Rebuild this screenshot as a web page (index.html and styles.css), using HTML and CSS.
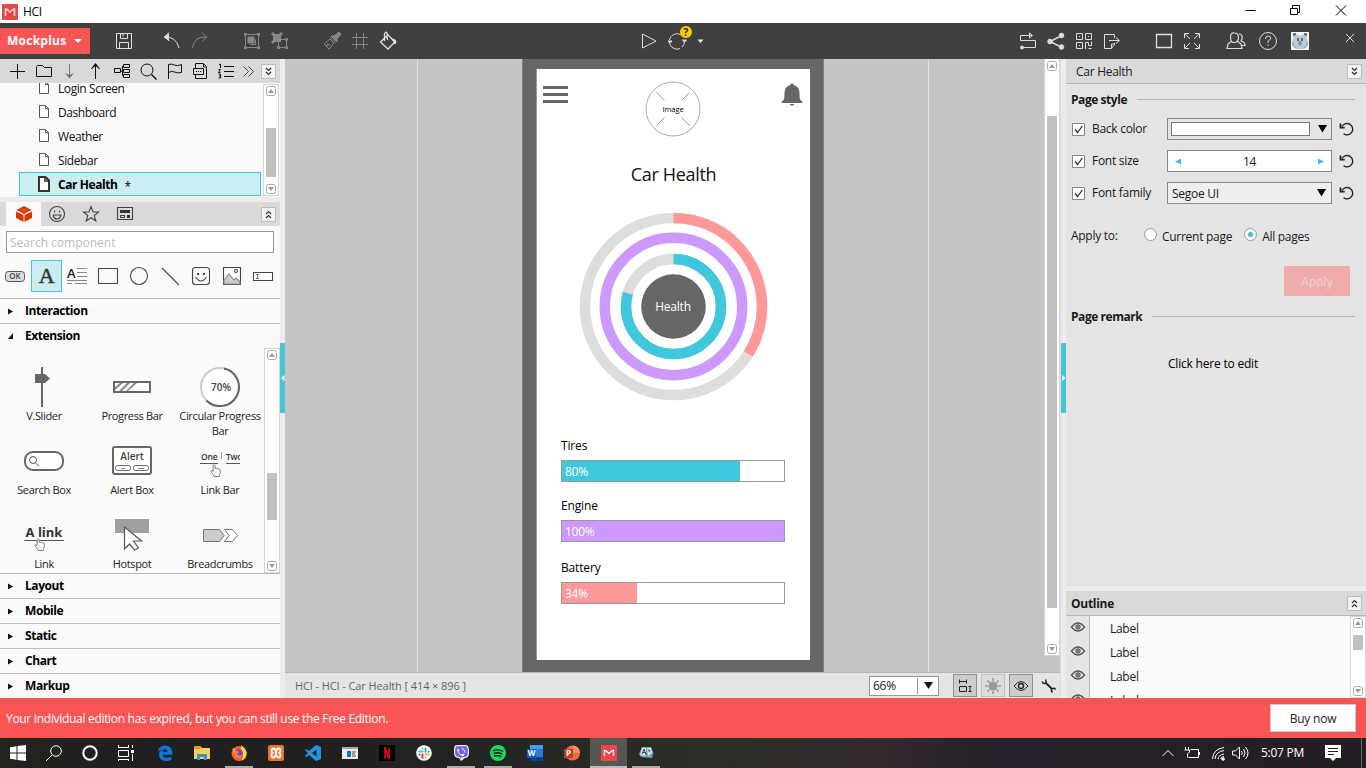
FILE: index.html
```html
<!DOCTYPE html>
<html lang="en">
<head>
<meta charset="utf-8">
<title>HCI</title>
<link rel="stylesheet" href="styles.css">
</head>
<body>
<svg class="defs" width="0" height="0">
  <symbol id="up" viewBox="0 0 10 10"><rect x=".5" y=".5" width="9" height="9" rx="2" fill="#fff" stroke="#aaa"/><path d="M2 7l3-4 3 4z" fill="#999"/></symbol>
  <symbol id="down" viewBox="0 0 10 10"><rect x=".5" y=".5" width="9" height="9" rx="2" fill="#fff" stroke="#aaa"/><path d="M2 3h6L5 7z" fill="#999"/></symbol>
  <symbol id="page" viewBox="0 0 12 16"><path d="M1.500 1.500h6l3 3v9h-9z" fill="#fff" stroke="#555"/><path d="M7.500 1.500v3h3" fill="none" stroke="#555"/></symbol>
  <symbol id="collapse" viewBox="0 0 15 15"><path d="M.5.5h14v14H.5z" fill="#f2f2f2" stroke="#bbb"/><path d="M5 4l2.500 2.500L10 4M5 8l2.500 2.500L10 8" fill="none" stroke="#333" stroke-width="1.200"/></symbol>
  <symbol id="expand" viewBox="0 0 15 15"><path d="M.5.5h14v14H.5z" fill="#f2f2f2" stroke="#bbb"/><path d="M5 7l2.500-2.500L10 7M5 11l2.500-2.500L10 11" fill="none" stroke="#333" stroke-width="1.200"/></symbol>
  <symbol id="eye" viewBox="0 0 16 12"><path d="M1.500 6Q8-2 14.500 6 8 14 1.500 6z" fill="none" stroke="#555" stroke-width="1.400"/><circle cx="8" cy="6" r="2.200" fill="#888" stroke="#555"/></symbol>
  <symbol id="reset" viewBox="0 0 16 16"><path d="M3 5.500A5.700 5.700 0 1 1 4.500 12.700" fill="none" stroke="#222" stroke-width="1.300"/><path d="M1.500 2.500v4.200h4.200" fill="none" stroke="#222" stroke-width="1.800"/></symbol>
  <symbol id="check" viewBox="0 0 13 13"><path d="M.5.5h12v12H.5z" fill="#fff" stroke="#888"/><path d="M3 6.500l2.500 3L10.300 3" fill="none" stroke="#222" stroke-width="1.200"/></symbol>
  <symbol id="hand" viewBox="0 0 14 16"><path d="M4.500 9V2.500q1-2 2 0V6q1-1 2 0 1-1 2 .5 1.500-.5 1.500 1V11q-1 1-1 3.500H5.500Q5 12 2 9.500 2 7 4.500 9" fill="#fff" stroke="#777"/></symbol>
</svg>

<header class="titlebar">
  <svg width="16" height="16"><rect width="16" height="16" rx="1" fill="#e2474b"/><path d="M3.500 12V5h1L8 8l3.500-3h1v7" fill="none" stroke="#ffd9d6" stroke-width="1.600"/></svg>
  <span class="apptitle">HCI</span>
  <svg class="winctl" width="110" height="23"><path d="M2.500 10.500h10" stroke="#000"/><path d="M47.500 8.500h7v6h-7zM49.500 8V5.500h7v7H55" fill="none" stroke="#000"/><path d="M93 5.500l10 10M103 5.500l-10 10" stroke="#000"/></svg>
</header>

<nav class="toolbar">
  <button class="brand">Mockplus <i></i></button>
  <div class="tools g1">
    <svg class="t" viewBox="0 0 24 24"><path d="M4.500 4.500h15v15h-15zM8.500 4.500v5h7v-5M7.500 19.500v-6h9v6M11 4.500v3"/></svg>
  </div>
  <div class="tools g2">
    <svg class="t" viewBox="0 0 24 24"><path d="M4 8q12-1 15 11M9 3.500L4.500 8l5 4"/><path d="M4 8l5-4v8z" fill="#ddd" stroke="none"/></svg>
    <svg class="t dim" viewBox="0 0 24 24"><path d="M19 8Q6 7 4.500 19M14 3.500L18.500 8l-4 4"/></svg>
  </div>
  <div class="tools g3">
    <svg class="t dim" viewBox="0 0 24 24"><path d="M5.500 5.500h13v13h-13zM4 4.500h3M4.500 4v3M17 4.500h3M19.500 4v3M4 19.500h3M4.500 17v3M17 19.500h3M19.500 17v3"/><path d="M8 8h6v6H8z" fill="#888"/><path d="M15.500 10.500v5h-5"/></svg>
    <svg class="t dim" viewBox="0 0 24 24"><path d="M5 5h8v8H5z" fill="#888" stroke="none"/><path d="M4 4h2v2H4zM12 4h2v2h-2zM4 12h2v2H4z" fill="#888"/><path d="M10.500 10.500h8v8h-8zM17.500 9.500h2v2h-2zM9.500 17.500h2v2h-2zM17.500 17.500h2v2h-2z"/></svg>
  </div>
  <div class="tools g3">
    <svg class="t dim" viewBox="0 0 24 24"><path d="M10 8l6 6M4 15l6-5 4 4-5 6zM7 15l3 1M6 17l2-1"/><path d="M11 7l3 0 5-4 2 2-4 5v3z" fill="#888"/></svg>
    <svg class="t dim" viewBox="0 0 24 24"><path d="M8.500 4v16M15.500 4v16M4 8.500h16M4 15.500h16"/></svg>
    <svg class="t" viewBox="0 0 24 24"><path d="M4.500 13L12 6l7 7-7 7zM8.500 12V5q1-3 2.500-1l.5 7M12 6l5 5" stroke-width="1.300"/><path d="M16 10q4 0 4 3l-1 2z" fill="#ddd"/></svg>
  </div>
  <div class="tools g4">
    <svg class="t" viewBox="0 0 24 24"><path d="M6.500 5v14L20 12z"/></svg>
    <div class="sync"><svg class="t" viewBox="0 0 24 24"><path d="M4.500 11A7.500 7.500 0 0 1 16 6M19.500 12A7.500 7.500 0 0 1 17 18M15 19.500A7.500 7.500 0 0 1 4.500 13"/><path d="M3 12.500h4M17.500 11.500h4" stroke-width="2"/></svg><b>?</b></div>
    <svg class="caret" viewBox="0 0 12 24"><path d="M3.500 10.500h6L6.500 14z" fill="#eee"/></svg>
  </div>
  <div class="tools g5">
    <svg class="t" viewBox="0 0 24 24"><path d="M16 6.500H4.500v5h15v7H7M13.500 4v5l3-2.500z"/><circle cx="6" cy="18.500" r="1.500" fill="#ddd"/></svg>
    <svg class="t" viewBox="0 0 24 24"><path d="M17 7L6 12.500 17 18" stroke-width="1.400"/><circle cx="17.500" cy="6.500" r="2.300" fill="#ddd"/><circle cx="6" cy="12.500" r="2.300" fill="#ddd"/><circle cx="17.500" cy="18" r="2.300" fill="#ddd"/></svg>
    <svg class="t" viewBox="0 0 24 24"><path d="M4.500 4.500h6v6h-6zM13.500 4.500h6v6h-6zM4.500 13.500h6v6h-6zM13.500 20v-6.500h3v3h3v-4M16.500 19.500h3M7 7.500h1M16 7.500h1M7 16.500h1"/></svg>
    <svg class="t" viewBox="0 0 24 24"><path d="M14.500 9V5.500h-10v14h7l3-4V14M11.500 19v-4h3M9 11.500h10M16 8.500l3.500 3-3.500 3"/></svg>
  </div>
  <div class="tools g3">
    <svg class="t" viewBox="0 0 24 24"><path d="M4.500 5.500h15v13h-15z" stroke-width="1.300"/></svg>
    <svg class="t" viewBox="0 0 24 24"><path d="M4.500 9V4.500H9M15 4.500h4.500V9M4.500 15v4.500H9M15 19.500h4.500V15M5 5l5 5M19 5l-5 5M5 19l5-5M19 19l-5-5"/></svg>
  </div>
  <div class="tools g6">
    <svg class="t" viewBox="0 0 24 24"><path d="M10.500 4q4 0 4 4.500t-4 5-4-5T10.500 4M8 12l-4 3-1 4.500h15L17 15l-4-3M15 5q4 0 3 5l-1 2q4 1 4 4.500h-3" stroke-width="1.200"/></svg>
    <svg class="t" viewBox="0 0 24 24"><circle cx="12" cy="12" r="8.500"/><path d="M9.500 10q0-3 2.700-3t2.500 2.500Q14 11 12 12.200V14M12 15.500V17"/></svg>
    <svg class="t" viewBox="0 0 24 24"><path d="M3 3h18v18H3z" fill="#f4f7f8" stroke="none"/><path d="M5 8l3-3 4 2 4-2 3 3 1 7-4 5H8l-4-5z" fill="#b9cbd8" stroke="none"/><path d="M6 7V5h2M18 7V5h-2M10 9v3M14 9v3" stroke="#3c4f60" stroke-width="1.500"/><path d="M5 13v4l3 2M19 13v4l-3 2" stroke="#7f98aa"/><ellipse cx="12" cy="14" rx="2" ry="2.500" fill="#8295a4" stroke="none"/></svg>
  </div>
  <svg class="t close" viewBox="0 0 24 24"><path d="M8 5l8 8M16 5l-8 8"/></svg>
</nav>

<main class="work">
  <aside class="left">
    <div class="pagebar">
      <svg class="p" viewBox="0 0 26 24"><path d="M13.500 5v15M6 12.500h15"/></svg>
      <svg class="p r1" viewBox="0 0 26 24"><path d="M5.500 17.500v-10l1-1h5l2 2h7v9z"/></svg>
      <svg class="p l1 gray" viewBox="0 0 26 24"><path d="M13.500 5v14"/><path d="M9 14l4.500 5.500L18 14l-4.500 2z" fill="#777" stroke="none"/></svg>
      <svg class="p" viewBox="0 0 26 24"><path d="M13.500 20V6M9.500 10l4-5 4 5"/><path d="M9 10l4.500-6L18 10l-4.500-3z" fill="#111" stroke="none"/></svg>
      <svg class="p r1" viewBox="0 0 26 24"><path d="M5.500 9.500h6v4h-6zM14.500 5.500h6v3h-6zM14.500 10.500h6v3h-6zM14.500 15.500h6v3h-6zM12 12h2M13.500 7v10"/></svg>
      <svg class="p" viewBox="0 0 26 24"><circle cx="12" cy="11" r="6"/><path d="M16.500 15.500l5 5" stroke-width="1.400"/></svg>
      <svg class="p" viewBox="0 0 26 24"><path d="M7.500 20V5.500q3-1 6 .5t7-.5v8q-4 1-7-.5t-6 .5"/></svg>
      <svg class="p" viewBox="0 0 26 24"><path d="M8.500 9V4.500h8l3 3v12h-11V16M6.500 9.500h10v6h-10zM16.500 5v3h3M9 12.500h1M11 12.500h1M13 12.500h1"/></svg>
      <svg class="p" viewBox="0 0 26 24"><path d="M11 7.500h10M11 12.500h10M11 17.500h10M6 6l1.500-1v4M5.500 10.500h2l-2 3h2M5.500 15h2v2h-1.500M7.500 17v2h-2"/></svg>
      <svg class="p l4" viewBox="0 0 26 24"><path d="M8.500 7.500l5 5-5 5M13.500 7.500l5 5-5 5" stroke="#444"/></svg>
      <svg class="fold" width="15" height="15"><use href="#collapse"/></svg>
    </div>
    <div class="tree">
      <ul class="pages">
        <li><svg width="12" height="16"><use href="#page"/></svg><span>Login Screen</span></li>
        <li><svg width="12" height="16"><use href="#page"/></svg><span>Dashboard</span></li>
        <li><svg width="12" height="16"><use href="#page"/></svg><span>Weather</span></li>
        <li><svg width="12" height="16"><use href="#page"/></svg><span>Sidebar</span></li>
        <li class="on"><svg width="12" height="16" viewBox="0 0 12 16"><path d="M1 1h6.500L11 4.500V15H1z" fill="#fff" stroke="#333" stroke-width="2"/><path d="M7 1v4h4" fill="none" stroke="#333" stroke-width="1.500"/></svg><span>Car Health</span><small>*</small></li>
      </ul>
      <div class="sb"><svg width="10" height="10"><use href="#up"/></svg><span class="th t1"></span><svg class="end" width="10" height="10"><use href="#down"/></svg></div>
    </div>
    <div class="tabs">
      <span class="tab"><svg width="18" height="18" viewBox="0 0 18 18"><path d="M1.500 5L9 1l7.500 4L9 9z" fill="#dc3704"/><path d="M1 6.500L8.500 10v7L1 13zM17 6.500L9.500 10v7l7.500-4z" fill="#dc3704"/><path d="M5.500 3l7 4M12.500 3l-7 4" stroke="#e9683f" stroke-width=".7"/></svg></span>
      <svg width="18" height="18" viewBox="0 0 18 18" class="ln"><circle cx="9" cy="9" r="7.500"/><path d="M5 10h8q-1 4-4 4t-4-4M6.500 5.500v2M11.500 5.500v2"/></svg>
      <svg width="18" height="18" viewBox="0 0 18 18" class="ln"><path d="M9 1.500l2 5.500h5.500l-4.300 3.500 1.600 5.500L9 12.700 4.200 16l1.600-5.500L1.500 7H7z"/></svg>
      <svg width="18" height="18" viewBox="0 0 18 18" class="ln"><path d="M1.500 2.500h15v12h-15z" /><path d="M4 5h10v3H4zM11 10h3v3h-3z" fill="#333" stroke="none"/><path d="M4.500 10.500h4v2h-4z"/></svg>
      <svg class="fold" width="15" height="15"><use href="#expand"/></svg>
    </div>
    <div class="search">Search component</div>
    <div class="quick">
      <svg viewBox="0 0 31 32"><rect x="5.500" y="11.500" width="19" height="10" rx="3" fill="#ddd" stroke="#555"/><text x="15" y="19.400" text-anchor="middle" class="ok">OK</text></svg>
      <svg viewBox="0 0 31 32" class="sel"><text x="15.500" y="23" text-anchor="middle" class="serif">A</text></svg>
      <svg viewBox="0 0 31 32"><text x="5" y="18" class="para">A</text><path d="M15 8.500h10M15 12.500h10M15 16.500h10M5 20.500h20M5 23.500h5M13 23.500h12" stroke="#888"/></svg>
      <svg viewBox="0 0 31 32" class="ln"><path d="M5.500 8.500h19v15h-19z"/></svg>
      <svg viewBox="0 0 31 32" class="ln"><circle cx="15" cy="16" r="8.500"/></svg>
      <svg viewBox="0 0 31 32" class="ln"><path d="M7 8l17 17"/></svg>
      <svg viewBox="0 0 31 32" class="ln"><rect x="6.500" y="7.500" width="17" height="17" rx="3"/><path d="M9.500 17q5.500 8 11 0"/><path d="M11 14h2M17 14h2" stroke-width="2"/></svg>
      <svg viewBox="0 0 31 32" class="ln"><path d="M6.500 7.500h17v17h-17z"/><path d="M7 20l5-6 5 6 2-2 4 4v2H7z" fill="#ccc" stroke="#888"/><circle cx="19" cy="11" r="1.500"/></svg>
      <svg viewBox="0 0 31 32" class="ln"><path d="M5.500 12.500h19v8h-19z" fill="#fff"/><path d="M8 14.500h3M9.500 14.500v4M8 18.500h3" stroke="#777"/></svg>
    </div>
    <div class="sec first"><svg width="6" height="7"><path d="M0 .5l5 3-5 3z" fill="#111"/></svg>Interaction</div>
    <div class="sec open"><svg width="6" height="7"><path d="M5 0v6H0z" fill="#111"/></svg>Extension</div>
    <div class="ext">
      <div class="comps">
        <figure><svg viewBox="0 0 88 48"><path d="M42 4v40" stroke="#666" stroke-width="2"/><path d="M35 11h10l5 4.500-5 4.500H35z" fill="#666"/></svg><figcaption>V.Slider</figcaption></figure>
        <figure><svg viewBox="0 0 88 48"><path d="M26 19h36v10H26z" fill="#fff" stroke="#666" stroke-width="2"/><path d="M27 24l5-4h3l-8 7zM31 28l8-8h3l-8 8zM38 28l8-8h3l-9 8z" fill="#888"/></svg><figcaption>Progress Bar</figcaption></figure>
        <figure><svg viewBox="0 0 88 48"><circle cx="44" cy="24" r="19" fill="#fff" stroke="#ccc" stroke-width="2"/><path d="M48 5.500A19 19 0 1 1 30.500 37.500" fill="none" stroke="#666" stroke-width="2"/><text x="45" y="28" text-anchor="middle" class="lbl9">70%</text></svg><figcaption>Circular Progress Bar</figcaption></figure>
        <figure><svg viewBox="0 0 88 48"><rect x="25" y="15" width="38" height="18" rx="8" fill="#fff" stroke="#666" stroke-width="2"/><circle cx="33" cy="23" r="3.500" fill="none" stroke="#555"/><path d="M35.500 26l3.500 3" stroke="#555"/></svg><figcaption>Search Box</figcaption></figure>
        <figure><svg viewBox="0 0 88 48"><rect x="25" y="10" width="38" height="27" rx="2" fill="#fff" stroke="#666" stroke-width="2"/><text x="44" y="23" text-anchor="middle" class="lbl9">Alert</text><rect x="27.500" y="28.500" width="15" height="5" rx="2" fill="none" stroke="#666"/><rect x="45.500" y="28.500" width="15" height="5" rx="2" fill="none" stroke="#666"/><path d="M33 31.500h4M50 31.500h6" stroke="#888"/></svg><figcaption>Alert Box</figcaption></figure>
        <figure><svg viewBox="0 0 88 48"><svg x="24" y="12" width="40" height="18"><text x="1" y="11" class="lbl8">One</text><text x="26" y="11" class="lbl8">Two</text><path d="M21.500 3v7" stroke="#999"/></svg><path d="M24 26.500h18M50 26.500h14" stroke="#555"/><use href="#hand" x="33" y="26" width="13" height="15"/></svg><figcaption>Link Bar</figcaption></figure>
        <figure><svg viewBox="0 0 88 48"><text x="44" y="26" text-anchor="middle" class="lbl12">A link</text><path d="M24 29.500h40" stroke="#555"/><use href="#hand" x="33" y="26" width="13" height="15"/></svg><figcaption>Link</figcaption></figure>
        <figure><svg viewBox="0 0 88 48"><path d="M27 8h34v14H27z" fill="#a0a0a0"/><path d="M36.500 16v22l5-5 5 6 4-2-5-7h8z" fill="#fff" stroke="#555" stroke-width="1.200"/></svg><figcaption>Hotspot</figcaption></figure>
        <figure><svg viewBox="0 0 88 48"><path d="M27.500 18.500h16l4.500 6-4.500 6h-16z" fill="#ccc" stroke="#777"/><path d="M48.500 18.500h8l5 6-5 6h-8l4.500-6z" fill="#fff" stroke="#777"/></svg><figcaption>Breadcrumbs</figcaption></figure>
      </div>
      <div class="sb"><svg width="10" height="10"><use href="#up"/></svg><span class="th t2"></span><svg class="end" width="10" height="10"><use href="#down"/></svg></div>
    </div>
    <div class="sec"><svg width="6" height="7"><path d="M0 .5l5 3-5 3z" fill="#111"/></svg>Layout</div>
    <div class="sec"><svg width="6" height="7"><path d="M0 .5l5 3-5 3z" fill="#111"/></svg>Mobile</div>
    <div class="sec"><svg width="6" height="7"><path d="M0 .5l5 3-5 3z" fill="#111"/></svg>Static</div>
    <div class="sec"><svg width="6" height="7"><path d="M0 .5l5 3-5 3z" fill="#111"/></svg>Chart</div>
    <div class="sec"><svg width="6" height="7"><path d="M0 .5l5 3-5 3z" fill="#111"/></svg>Markup</div>
  </aside>
  <div class="split"><span><svg width="5" height="8"><path d="M4.500 1v6L1 4z" fill="#fff"/></svg></span></div>

  <section class="center">
    <div class="canvas">
      <div class="stage">
        <div class="guides">
          <div class="phone"><div class="screen">
            <div class="apphead">
              <svg class="menu" width="25" height="18"><path d="M0 1.500h25M0 8.500h25M0 15.500h25" stroke="#666" stroke-width="2.800"/></svg>
              <svg width="56" height="56" viewBox="0 0 56 56"><circle cx="28" cy="28" r="27" fill="#fff" stroke="#aaa"/><path d="M11.500 11.500l8 8M44.500 11.500l-8 8M11.500 44.500l8-8M44.500 44.500l-8-8" stroke="#999"/><text x="28" y="31" text-anchor="middle" class="imgt">Image</text></svg>
              <svg class="bell" width="22" height="24"><path d="M9.500 1q1.500-1.500 3 0v1q6 1.500 6 8 0 6 1 7l2 2v1H.5v-1l2-2q1-1 1-7 0-6.500 6-8zM8.500 21h5q-2.500 3.500-5 0z" fill="#666"/></svg>
            </div>
            <h1>Car Health</h1>
            <svg class="rings" width="190" height="190" viewBox="-95.500 -95.500 190 190">
              <g fill="none" stroke-width="10.500">
                <circle r="88.500" stroke="#ddd"/><circle r="68.700" stroke="#c9f"/><circle r="47.500" stroke="#ddd"/>
                <circle r="88.500" stroke="#f99" pathLength="100" stroke-dasharray="34 66" transform="rotate(-90)"/>
                <circle r="47.500" stroke="#41c7db" pathLength="100" stroke-dasharray="79.500 20.500" transform="rotate(-90)"/>
              </g>
              <circle r="32.300" fill="#666"/><text x="-.5" y="4.500" text-anchor="middle" class="health">Health</text>
            </svg>
            <div class="stat"><label>Tires</label><div class="bar"><span class="teal" style="width:80%">80%</span></div></div>
            <div class="stat"><label>Engine</label><div class="bar"><span class="purple" style="width:100%">100%</span></div></div>
            <div class="stat last"><label>Battery</label><div class="bar"><span class="pink" style="width:34%">34%</span></div></div>
          </div></div>
        </div>
      </div>
      <div class="sb big"><svg width="10" height="10"><use href="#up"/></svg><span class="th t3"></span><svg class="end" width="10" height="10"><use href="#down"/></svg></div>
    </div>
    <footer class="status">
      <span class="crumb">HCI - HCI - Car Health [ 414 × 896 ]</span>
      <div class="zoom"><span>66%</span><svg width="20" height="16"><path d="M6 4h9l-4.500 7z" fill="#111"/></svg></div>
      <span class="sbtn"><svg width="14" height="14"><path d="M1 2.500h8M1.500.5v4M8.500.5v4M1.500 7.500h7v5h-7zM10.500 7.500h3M12 7.500v5M10.500 12.500h3" fill="none" stroke="#222"/></svg></span>
      <span class="sbtn pale"><svg width="16" height="16" viewBox="-8 -8 16 16"><circle r="4.500" fill="#999"/><path d="M0-8v3M0 8V5M-8 0h3M8 0H5M-5.500-5.500l2 2M5.500-5.500l-2 2M-5.500 5.500l2-2M5.500 5.500l-2-2" stroke="#999" stroke-width="1.600"/></svg></span>
      <span class="sbtn"><svg width="16" height="12"><path d="M1 6Q8-3 15 6 8 15 1 6z" fill="none" stroke="#222"/><circle cx="8" cy="6" r="2.500" fill="none" stroke="#222" stroke-width="1.300"/></svg></span>
      <svg class="wrench" width="16" height="16" viewBox="0 0 16 16"><path d="M5 5l6 6" stroke="#222" stroke-width="1.800"/><path d="M1 3.500Q2 6 4 5.500 6 4.500 4.500 1.500M11.500 14.500q-2-2-.5-3.500 2-1.500 3.500.5" fill="none" stroke="#222" stroke-width="1.500"/></svg>
    </footer>
  </section>
  <div class="split rs"><span><svg width="5" height="8"><path d="M1 1v6l3.500-3z" fill="#fff"/></svg></span></div>

  <aside class="right">
    <div class="rhead"><span>Car Health</span><svg width="15" height="15"><use href="#collapse"/></svg></div>
    <div class="props">
      <h2>Page style<i></i></h2>
      <div class="row"><svg width="13" height="13"><use href="#check"/></svg><label>Back color</label><div class="field color"><span></span><svg width="9" height="8"><path d="M0 0h9L4.500 7.500z"/></svg></div><svg class="rst" width="16" height="16"><use href="#reset"/></svg></div>
      <div class="row"><svg width="13" height="13"><use href="#check"/></svg><label>Font size</label><div class="field num"><svg width="6" height="7"><path d="M6 .5v6l-6-3z" fill="#3dc4d8"/></svg><span>14</span><svg width="6" height="7"><path d="M0 .5v6l6-3z" fill="#3dc4d8"/></svg></div><svg class="rst" width="16" height="16"><use href="#reset"/></svg></div>
      <div class="row"><svg width="13" height="13"><use href="#check"/></svg><label>Font family</label><div class="field fam"><span>Segoe UI</span><svg width="9" height="8"><path d="M0 0h9L4.500 7.500z"/></svg></div><svg class="rst" width="16" height="16"><use href="#reset"/></svg></div>
      <div class="applyto"><label>Apply to:</label><span class="radio"></span><em>Current page</em><span class="radio on"></span><em>All pages</em></div>
      <button class="apply">Apply</button>
      <h2 class="remark">Page remark<i></i></h2>
      <p>Click here to edit</p>
    </div>
    <div class="rhead out"><b>Outline</b><svg width="15" height="15"><use href="#expand"/></svg></div>
    <div class="outline">
      <div class="eyes"><svg><use href="#eye"/></svg><svg><use href="#eye"/></svg><svg><use href="#eye"/></svg><svg><use href="#eye"/></svg></div>
      <ul><li>Label</li><li>Label</li><li>Label</li><li>Label</li></ul>
      <div class="sb"><svg width="10" height="10"><use href="#up"/></svg><span class="th t4"></span><svg class="end" width="10" height="10"><use href="#down"/></svg></div>
    </div>
  </aside>
</main>

<div class="notice"><span>Your Individual edition has expired, but you can still use the Free Edition.</span><button>Buy now</button></div>

<footer class="taskbar">
  <div class="apps sys">
    <span><svg viewBox="0 0 16 16"><path d="M0 2.200l6.500-1v6.300H0zM7.500 1L16 0v7.500H7.500zM0 8.500h6.500v6.300l-6.500-1zM7.500 8.500H16V16l-8.500-1z" fill="#fff"/></svg></span>
    <span><svg viewBox="0 0 16 16" class="wl"><circle cx="10" cy="6" r="5.300"/><path d="M6 10L0 16"/></svg></span>
    <span><svg viewBox="0 0 16 16" class="wl"><circle cx="8" cy="8" r="6.700" stroke-width="2"/></svg></span>
    <span><svg viewBox="0 0 16 16" class="wl"><path d="M0 2.500h11M.5 0v2.500M10.500 0v2.500M.5 5.500h10v6H.5zM0 14.500h11M.5 14v2M10.500 14v2M14.500 0v3M14.500 9v7"/><path d="M13 5h3v3h-3z" fill="#fff" stroke="none"/></svg></span>
  </div>
  <div class="apps main">
    <span><svg viewBox="0 0 16 16"><path d="M.8 7Q1.500.5 8 .5t7.300 6.500v2.700H5.500q.5 3 4.500 3 2.500 0 4.500-1v3Q12 16 9 16 2 15.500 2 9.500q0-3 3-5Q1.800 5 .8 7zM5.500 6.800h5Q10.300 4.300 8 4.300T5.500 6.800z" fill="#0b78d7" fill-rule="evenodd"/></svg></span>
    <span><svg viewBox="0 0 16 16"><path d="M0 1h6l2 2h8v11H0z" fill="#fbd05c"/><path d="M0 1h6l2 2-2 1H0z" fill="#e09d13"/><path d="M3 9h10v6h-3v-3H6v3H3z" fill="#3e91cf"/></svg></span>
    <span class="run"><svg viewBox="0 0 16 16"><circle cx="8" cy="8.500" r="7.500" fill="#fb5b31"/><path d="M10 0q6 4 5.500 9 0 5-5 6.500Q14 9 9 4q2-1 1-4z" fill="#ffd43b"/><path d="M1.500 3l3 1.500-2 4z" fill="#ffb52b"/><circle cx="8" cy="8" r="3.800" fill="#7542c9"/><path d="M3 6q3-1 5 1l-2 2q1 3 5 1-3 5-7 1z" fill="#fb8a2d"/></svg></span>
    <span><svg viewBox="0 0 16 16"><rect width="16" height="16" rx="2" fill="#ed742c"/><path d="M3.500 5.500q0-2 2-2 2 0 2.500 4.500.5-4.500 2.500-4.500 2 0 2 2 0 2-2 2.500 2 0 2 2.200 0 2.300-2 2.300-2 0-2.500-4.500-.5 4.500-2.500 4.500-2 0-2-2.300 0-2.200 2-2.200-2-.5-2-2.500" fill="none" stroke="#fff" stroke-width="1.800"/></svg></span>
    <span><svg viewBox="0 0 16 16"><path d="M11 0l5 2v12l-5 2-7-6-2.500 2L0 11l3-3-3-3 1.500-1L4 6zM11.500 4.500L7 8l4.500 3.500z" fill="#2196df" fill-rule="evenodd"/></svg></span>
    <span><svg viewBox="0 0 16 16"><path d="M0 2h16v12H0z" fill="#eee"/><path d="M0 2h16v2H0z" fill="#aaa"/><path d="M5 6h4v6H5z" fill="#0c78ce"/><path d="M10 7h4M10 9h3M10 11h4" stroke="#555"/></svg></span>
    <span><svg viewBox="0 0 16 16"><path d="M0 0h16v16H0z" fill="#000"/><path d="M6 14V3M10 14V3" stroke="#b20610" stroke-width="2"/><path d="M5 2h2l4 12H9z" fill="#e50914"/></svg></span>
    <span><svg viewBox="0 0 16 16"><circle cx="8" cy="8" r="7.800" fill="#fff"/><g stroke-width="1.900" stroke-linecap="round"><path d="M3.500 6.500h3.200M6.700 3.500v.1" stroke="#36c5f0"/><path d="M9.500 3.500v3.200M12.500 6.700h.1" stroke="#2eb67d"/><path d="M9.500 9.500h3.200M9.500 12.500h.1" stroke="#ecb22e"/><path d="M6.500 9.500v3.200M3.500 9.500h.1" stroke="#e01e5a"/></g></svg></span>
    <span class="run"><svg viewBox="0 0 16 16"><path d="M4 0h8q4 0 4 5v3q0 5-4 5l-4 3-2-3q-5 0-5-5V4q0-4 3-4z" fill="#eee"/><path d="M4 1.200h8q2.800 0 2.800 4V8q0 4-3 4H9l-2 2.300V12Q2.200 12 2.200 8V5q0-3.800 1.800-3.800z" fill="#7360e8"/><path d="M5 3.500l1.500 2-1 1q1 2.500 3 3l1-1 2 1.200q-1 2-3 1Q5 9 4.200 5z" fill="#fff"/><path d="M8.500 3.500q3 0 3.500 4" fill="none" stroke="#fff"/></svg></span>
    <span class="run"><svg viewBox="0 0 16 16"><circle cx="8" cy="8" r="8" fill="#1ed760"/><path d="M3.500 5.500q5-1.500 9 .7M4 8.300q4-1.200 7.800.6M4.500 11q3.500-1 6.500.6" fill="none" stroke="#191414" stroke-width="1.400" stroke-linecap="round"/></svg></span>
    <span><svg viewBox="0 0 16 16"><path d="M3 0h13v16H3z" fill="#2b7cd3"/><path d="M3 0h13v4H3z" fill="#41a5ee"/><path d="M3 12h13v4H3z" fill="#103f91"/><path d="M0 4h9v9H0z" fill="#185abd"/><text x="4.500" y="11.300" text-anchor="middle" class="off">W</text></svg></span>
    <span><svg viewBox="0 0 16 16"><circle cx="8.500" cy="8" r="7.500" fill="#ed6c47"/><path d="M9 .5A7.500 7.500 0 0 1 16 8H9z" fill="#ff8f6b"/><path d="M0 4h9v9H0z" fill="#c43e1c"/><text x="4.500" y="11.300" text-anchor="middle" class="off">P</text></svg></span>
    <span class="run act"><svg viewBox="0 0 16 16"><path d="M0 0h16v16H0z" fill="#e8484c"/><path d="M3.500 11V5.500h1L8 8.500l3.500-3h1V11" fill="none" stroke="#fff" stroke-width="1.300"/></svg></span>
    <span class="run"><svg viewBox="0 0 16 16"><path d="M4 2l9 0 2.500 6-1.500 5-11-1-2-3z" fill="#7e9bb6"/><path d="M4 3l4 0 0 8-6-1zM9 3l4 0 1 5-4 3z" fill="#dbe6ee"/><path d="M4 9l2-5 2 6M4.500 7.500h3" fill="none" stroke="#294b70"/><path d="M9.500 4l3 1-1 3z" fill="#547b4c"/></svg></span>
  </div>
  <div class="tray">
    <svg width="16" height="16" class="wl"><path d="M2.500 11l5.500-5.500 5.500 5.500"/></svg>
    <svg width="18" height="16" class="wl batt"><path d="M7.500 4.500h8v8h-10M16.500 7v3M2.500 2v3M5.500 2v3M1.500 5h5v2l-2 2v3.500"/></svg>
    <svg width="14" height="16" class="wl wifi"><path d="M1.500 14Q2 4 13 2.500M4 14Q4.500 7 13 5.500M7 14q.5-4 6-5M9.500 14q.5-2 3.500-2.500"/><circle cx="12" cy="14" r="1.300" fill="#fff"/></svg>
    <svg width="18" height="16" class="wl vol"><path d="M1.500 6h3l4-4v12l-4-4h-3zM10.500 6q1.500 2 0 4M12.500 4q3 4 0 8M14.500 2q5 6 0 12"/></svg>
    <span class="time">5:07 PM</span>
    <svg width="16" height="16" class="note"><path d="M0 0h16v13h-5l-3 3-3-3H0z" fill="#fff"/><path d="M3 3.500h10M3 6.500h10M3 9.500h6" stroke="#222"/></svg>
    <i class="peek"></i>
  </div>
</footer>
</body>
</html>
```
FILE: styles.css
```css
* { box-sizing: border-box; }
body { margin: 0; width: 1366px; height: 768px; overflow: hidden; display: flex; flex-direction: column; font: 12px/16px "Open Sans", "Noto Sans", sans-serif; letter-spacing: -.28px; color: #1a1a1a; }
svg { flex: none; display: block; }
.defs { position: absolute; }
ul, h1, h2, p, figure { margin: 0; padding: 0; list-style: none; }
button { font: inherit; letter-spacing: inherit; border: 0; padding: 0; }

.titlebar { height: 23px; display: flex; align-items: center; padding-left: 2px; background: #fff; }
.apptitle { margin-left: 5px; color: #000; }
.winctl { margin-left: auto; margin-right: 13px; }

.toolbar { height: 36px; background: #404040; display: flex; align-items: center; }
.brand { width: 90px; height: 26px; background: #fa5555; color: #fff; font-weight: 700; text-align: left; padding-left: 7px; display: flex; align-items: center; letter-spacing: .25px; }
.brand i { border: 4px solid transparent; border-top-color: #fff; border-bottom: 0; margin-left: 8px; }
.tools { display: flex; gap: 4px; }
.t { width: 24px; height: 24px; fill: none; stroke: #ddd; }
.dim { stroke: #888; }
.g1 { margin-left: 22px; }
.g2 { margin-left: 24px; }
.g3 { margin-left: 28px; }
.g4 { margin-left: 236px; gap: 5px; }
.g5 { margin-left: 310px; }
.g6 { margin-left: 20px; gap: 8px; }
.close { margin-left: 26px; }
.caret { width: 12px; height: 24px; }
.sync { position: relative; }
.sync b { position: absolute; left: 15px; top: -3px; width: 12px; height: 12px; border-radius: 6px; background: #fc0; color: #222; font-size: 10px; line-height: 12px; text-align: center; letter-spacing: 0; }

.work { height: 639px; display: flex; }
.left { width: 280px; background: #fafafa; display: flex; flex-direction: column; overflow: hidden; }
.pagebar { height: 24px; background: #d9d9d9; display: flex; align-items: center; padding-left: 4px; flex: none; }
.p { width: 26px; height: 24px; fill: none; stroke: #111; }
.gray { stroke: #777; }
.r1 { margin-left: 1px; }
.l1 { margin-left: -1px; }
.l4 { margin-left: -4px; }
.fold { margin-left: auto; margin-right: 4px; }
.tree { height: 114px; display: flex; justify-content: space-between; overflow: hidden; flex: none; padding-right: 1px; }
.pages { margin-top: -7px; margin-left: 19px; width: 242px; flex: none; color: #111; letter-spacing: -.42px; }
.pages li { height: 24px; display: flex; align-items: center; padding-left: 19px; gap: 8px; }
.pages li span { padding-top: 2px; }
.pages .on { background: #cbecf0; border: 1px solid #41c7db; font-weight: 700; color: #000; padding-left: 18px; }
.pages small { font-size: 12px; font-weight: 400; padding-top: 5px; margin-left: -1px; }
.sb { width: 16px; flex: none; background: #fff; border: 1px solid #d5d5d5; display: flex; flex-direction: column; align-items: center; padding: 1px 0 1px; }
.tree .sb { height: 112px; margin-top: 1px; }
.th { width: 10px; background: #c0c0c0; }
.end { margin-top: auto; }
.t1 { height: 49px; margin-top: 32px; }
.t2 { height: 47px; margin-top: 113px; }
.tabs { height: 29px; border-top: 5px solid #ececec; background: #d9d9d9; display: flex; align-items: center; padding-left: 6px; gap: 16px; flex: none; }
.tab { width: 35px; height: 24px; background: #fafafa; display: grid; place-items: center; margin-right: -9px; }
.ln { fill: none; stroke: #444; stroke-width: 1.100; }
.search { height: 22px; margin: 5px 6px 0; border: 1px solid #999; background: #fff; color: #bbb; padding-left: 3px; line-height: 22px; letter-spacing: 0; flex: none; }
.quick { display: flex; height: 32px; margin: 7px 0 6px; flex: none; }
.quick svg { width: 31px; height: 32px; }
.quick .sel { background: #cbecf0; outline: 1px solid #41c7db; outline-offset: -1px; }
.ok { font-size: 8px; font-weight: 600; letter-spacing: 0; fill: #444; }
.serif { font: 22px "Liberation Serif", serif; fill: #333; stroke: #333; stroke-width: .5; }
.para { font-size: 13px; font-weight: 600; fill: #222; }
.sec { height: 25px; border-top: 1px solid #bbb; display: flex; align-items: center; padding-left: 8px; gap: 11px; font-weight: 700; color: #000; flex: none; letter-spacing: -.42px; }
.ext { height: 225px; display: flex; justify-content: space-between; flex: none; overflow: hidden; }
.comps { width: 264px; display: grid; grid-template-columns: repeat(3, 88px); grid-auto-rows: 74px; padding-top: 3px; }
.comps figure { text-align: center; font-size: 11px; line-height: 15px; color: #222; padding-top: 12px; letter-spacing: -.35px; }
.comps svg { width: 88px; height: 48px; margin-bottom: -3px; }
.comps svg svg { width: 40px; height: 18px; }
.lbl9 { font-size: 10px; font-weight: 600; fill: #444; letter-spacing: 0; }
.lbl8 { font-size: 8.500px; font-weight: 600; fill: #333; letter-spacing: -.2px; }
.lbl12 { font-size: 13px; font-weight: 700; fill: #333; letter-spacing: 0; }

.split { width: 5px; background: #ececec; display: flex; align-items: flex-start; }
.split span { width: 5px; height: 70px; margin-top: 284px; background: #41c7d8; display: flex; align-items: center; }

.center { width: 775px; display: flex; flex-direction: column; }
.canvas { height: 613px; background: #c4c4c4; display: flex; }
.stage { width: 759px; padding: 0 116px 0 132px; }
.guides { height: 613px; width: 512px; border: solid #e0e0e0; border-width: 0 1px; display: flex; justify-content: center; }
.phone { width: 302px; background: #666; padding: 10px 14px 12px 13px; border: solid #808080; border-width: 0 1px; }
.screen { width: 274px; height: 591px; background: #fff; border-left: 1px solid #999; }
.apphead { display: flex; height: 80px; padding: 12px 7px 0 6px; justify-content: space-between; }
.menu { margin: 5px 0 0; }
.apphead .bell { margin-top: 2px; }
.apphead > svg:nth-child(2) { margin-left: -3px; }
.imgt { font-size: 7.500px; letter-spacing: -.1px; fill: #000; }
h1 { font-size: 18px; line-height: 24px; font-weight: 400; text-align: center; color: #111; padding: 13px 0 0; height: 62px; letter-spacing: -.32px; }
.rings { margin-left: 41px; }
.health { font-size: 12px; fill: #fff; letter-spacing: -.2px; }
.stat { margin: 0 25px 16px 24px; }
.rings + .stat { margin-top: 37px; }
.stat label { display: block; line-height: 16px; height: 22px; color: #000; letter-spacing: -.15px; }
.stat.last { margin-top: 18px; }
.bar { height: 22px; border: 1px solid #999; background: #fff; }
.bar span { display: block; height: 20px; line-height: 21px; color: #fff; padding-left: 3px; }
.teal { background: #41c7db; }
.purple { background: #c9f; }
.pink { background: #f99; }
.sb.big { height: 597px; border-top: 0; padding-top: 2px; }
.t3 { height: 492px; margin-top: 45px; }
.status { height: 26px; border-top: 1px solid #b5b5b5; background: #e4e4e4; display: flex; align-items: center; padding-left: 10px; color: #666; font-size: 11px; letter-spacing: -.1px; }
.zoom { margin-left: auto; width: 70px; height: 20px; border: 1px solid #999; background: #fff; display: flex; align-items: center; color: #222; font-size: 12px; letter-spacing: -.28px; }
.zoom span { width: 48px; padding-left: 3px; border-right: 1px solid #999; }
.sbtn { width: 24px; height: 23px; border: 1px solid #909090; background: #ccc; display: grid; place-items: center; margin-left: 4px; }
.zoom + .sbtn { margin-left: 14px; }
.sbtn.pale { border-color: #c0c0c0; background: #dcdcdc; }
.wrench { margin: 0 3px 0 8px; }

.rs { border-left: 1px solid #ddd; width: 6px; }
.right { width: 300px; background: #e4e4e4; display: flex; flex-direction: column; }
.rhead { height: 25px; background: #d9d9d9; border-bottom: 1px solid #b5b5b5; display: flex; align-items: center; justify-content: space-between; padding: 0 4px 0 10px; flex: none; }
.rhead span, .rhead b { padding-top: 2px; }
.props { height: 502px; padding: 0 11px 0 5px; flex: none; }
h2 { font-size: 12px; line-height: 16px; display: flex; gap: 10px; padding-top: 8px; letter-spacing: -.45px; }
h2 i { flex: 1; height: 1px; background: #b5b5b5; margin-top: 7px; }
.row { height: 22px; margin-top: 10px; display: flex; align-items: center; }
.row > svg:first-child { margin: 0 7px 0 1px; }
.row label { width: 75px; }
.field { width: 165px; height: 22px; border: 1px solid #888; display: flex; align-items: center; justify-content: space-between; padding: 0 4px 0 3px; }
.color span { width: 139px; height: 14px; border: 1px solid #777; background: #fff; }
.num { background: #fff; padding: 0 7px; }
.fam { background: #efefef; padding: 0 5px 0 4px; }
.num span, .fam span { padding-top: 1px; }
.rst { margin-left: 7px; }
.applyto { display: flex; height: 20px; margin-top: 22px; }
.applyto label { width: 73px; padding-top: 2px; }
.applyto em { font-style: normal; padding-top: 3px; margin-left: 5px; }
.radio { width: 13px; height: 13px; border: 1px solid #999; border-radius: 7px; background: #fff; margin-top: 2px; display: grid; place-items: center; }
em + .radio { margin-left: 12px; }
.radio.on::after { content: ""; width: 5px; height: 5px; border-radius: 2px; background: #3dc4d8; }
.apply { display: block; margin: 20px 5px 0 auto; width: 66px; height: 30px; padding-top: 2px; background: #eeacac; color: #f6cfcf; letter-spacing: 0; }
.remark { padding-top: 13px; }
.props p { text-align: center; padding-top: 31px; color: #000; letter-spacing: -.2px; }
.out { padding-left: 5px; border-top: 5px solid #ececec; height: 30px; }
.outline { height: 82px; display: flex; overflow: hidden; background: #fafafa; }
.eyes { width: 24px; background: #e4e4e4; border-right: 1px solid #bbb; padding-top: 5px; }
.eyes svg { width: 16px; height: 12px; margin: 0 0 12px 4px; }
.outline ul { flex: 1; padding: 0 0 0 20px; }
.outline li { line-height: 25px; height: 24px; }
.outline .sb { height: 82px; }
.t4 { height: 15px; margin-top: 7px; }

.notice { height: 40px; background: #fa5555; color: #fff; display: flex; align-items: center; justify-content: space-between; padding: 0 10px 0 6px; letter-spacing: -.31px; }
.notice span { padding-top: 2px; }
.notice button { width: 86px; height: 28px; padding-top: 2px; background: #fff; border: 1px solid #ccc; color: #222; letter-spacing: -.2px; }
.taskbar { height: 30px; display: flex; background: linear-gradient(90deg, #22221f 0, #1f2020 20%, #222522 35%, #2b2e26 50%, #332a2e 64%, #251f29 74%, #251f24 100%); }
.apps { display: flex; }
.apps span { height: 30px; width: 36px; display: grid; place-items: center; padding-bottom: 1px; }
.apps svg { width: 16px; height: 16px; }
.main { margin-left: 2px; }
.main span { width: 37px; }
.main .run { background: linear-gradient(#aaa, #aaa) 50% 100% / 28px 2px no-repeat; }
.main .act { background: linear-gradient(#bbb, #bbb) 50% 100% / 37px 2px no-repeat, #555852; }
.wl { fill: none; stroke: #fff; }
.off { font-size: 8px; font-weight: 700; fill: #fff; letter-spacing: 0; }
.tray { margin-left: auto; width: 206px; display: flex; align-items: center; color: #fff; }
.batt { margin-left: 7px; }
.wifi { margin-left: 10px; }
.vol { margin-left: 6px; }
.time { width: 64px; margin-left: 12px; }
.note { margin-left: 0; }
.peek { width: 1px; height: 30px; margin-left: 20px; background: #666; }
```
